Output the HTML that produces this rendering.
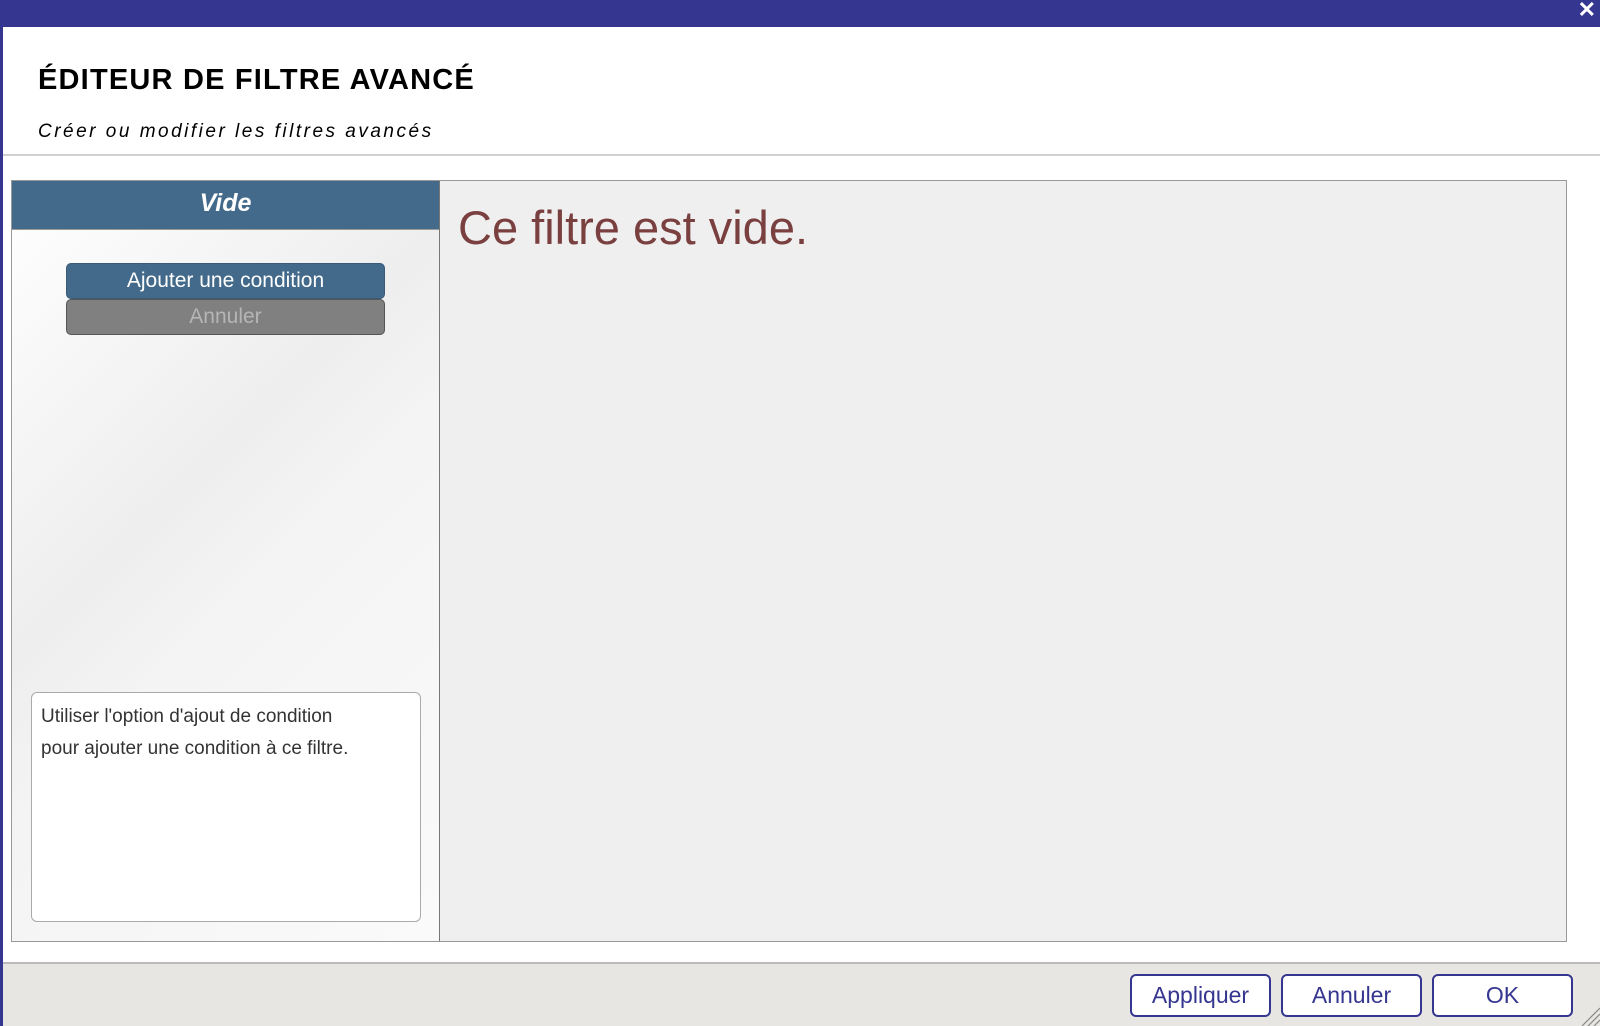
<!DOCTYPE html>
<html><head><meta charset="utf-8"><style>
*{box-sizing:border-box;margin:0;padding:0}
body{width:1600px;height:1026px;overflow:hidden;background:#fff;font-family:"Liberation Sans",sans-serif;position:relative}
.tb{position:absolute;left:0;top:0;width:1600px;height:27px;background:#35368f}
.lb{position:absolute;left:0;top:27px;width:3px;height:999px;background:#35368f}
.x{position:absolute;right:4px;top:-3px;color:#fff;font-size:22px;font-weight:bold}
h1{position:absolute;left:38px;top:64px;font-size:29px;font-weight:bold;letter-spacing:1.2px;color:#000}
.sub{position:absolute;left:38px;top:121px;font-size:19px;font-style:italic;letter-spacing:2.5px;color:#000}
.hl{position:absolute;left:3px;top:154px;width:1597px;height:2px;background:#d0d0d0}
.main{position:absolute;left:11px;top:180px;width:1556px;height:762px;border:1px solid #999;background:#efefef}
.left{position:absolute;left:0;top:0;width:428px;height:760px;border-right:1px solid #777;background:linear-gradient(135deg,#fff 0%,#eee 40%,#f4f4f4 55%,#fafafa 100%)}
.lh{height:49px;background:#436a8a;color:#fff;font-weight:bold;font-style:italic;font-size:25px;text-align:center;padding-top:8px;border-bottom:1px solid #999}
.b1,.b2{position:absolute;left:54px;width:319px;height:36px;border-radius:5px;text-align:center;font-size:21px;line-height:34px}
.b1{top:82px;background:#436a8a;color:#fff;border:1px solid #3a5a78}
.b2{top:118px;background:#808080;color:#b5b5b5;border:1px solid #555}
.info{position:absolute;left:19px;top:511px;width:390px;height:230px;background:#fff;border:1px solid #aaa;border-radius:6px;padding:8px 9px 10px 9px;font-size:19px;line-height:32px;color:#333}
.msg{position:absolute;left:446px;top:19px;font-size:47px;color:#7a3f3f}
.foot{position:absolute;left:3px;top:962px;width:1597px;height:64px;background:#e8e6e2;border-top:2px solid #bbb}
.btn{position:absolute;top:974px;width:141px;height:43px;border:2px solid #35368f;border-radius:6px;background:#fff;color:#35368f;font-size:23px;text-align:center;line-height:39px}
</style></head><body>
<div class="tb"><span class="x">✕</span></div>
<div class="lb"></div>
<h1>ÉDITEUR DE FILTRE AVANCÉ</h1>
<div class="sub">Créer ou modifier les filtres avancés</div>
<div class="hl"></div>
<div class="main">
<div class="left"><div class="lh">Vide</div>
<div class="b1">Ajouter une condition</div>
<div class="b2">Annuler</div>
<div class="info">Utiliser l'option d'ajout de condition<br>pour ajouter une condition à ce filtre.</div>
</div>
<div class="msg">Ce filtre est vide.</div>
</div>
<div class="foot"></div>
<div class="btn" style="left:1130px">Appliquer</div>
<div class="btn" style="left:1281px">Annuler</div>
<div class="btn" style="left:1432px">OK</div>
<svg style="position:absolute;left:1578px;top:1004px" width="22" height="22"><path d="M4 22L22 4M10 22L22 10M16 22L22 16" stroke="#888" stroke-width="1.2"/></svg>
</body></html>
